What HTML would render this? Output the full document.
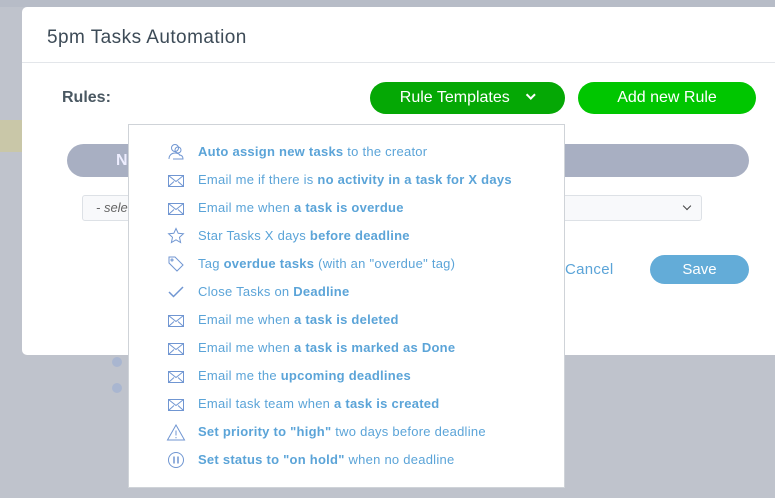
<!DOCTYPE html>
<html><head><style>
*{margin:0;padding:0;box-sizing:border-box}
body{width:775px;height:498px;overflow:hidden;background:#bfc3cc;font-family:"Liberation Sans",sans-serif;position:relative}
.abs{position:absolute}
.modal{left:22px;top:7px;width:760px;height:348px;background:#fff;border-radius:5px}
.title{left:47px;top:27px;font-size:19px;color:#3d4b57;letter-spacing:0.45px}
.hr{left:22px;top:62px;width:753px;height:1px;background:#e3e6ea}
.rules{left:62px;top:89px;font-size:16px;font-weight:bold;color:#4a5862}
.btn{border-radius:16px;color:#fff;font-size:16px;text-align:center;line-height:31px}
.dd{left:128px;top:124px;width:437px;height:364px;background:#fff;border:1px solid #cfd3d8}
.it{position:absolute;left:69px;font-size:13px;color:#5ba4d8;white-space:nowrap;letter-spacing:0.25px}
.it b{font-weight:bold}
.ic{position:absolute;left:38px;width:18px;height:18px}
svg{stroke:#7096d2;fill:none;stroke-width:1}
</style></head><body>
<div class="abs" style="left:0;top:0;width:775px;height:7px;background:#b7bcc7"></div>
<div class="abs" style="left:0;top:120px;width:22px;height:32px;background:#c9c7a8"></div>
<div class="abs" style="left:112px;top:357px;width:10px;height:10px;border-radius:5px;background:#a9b6d0"></div>
<div class="abs" style="left:112px;top:383px;width:10px;height:10px;border-radius:5px;background:#a9b6d0"></div>
<div class="abs modal"></div>
<div class="abs title">5pm Tasks Automation</div>
<div class="abs hr"></div>
<div class="abs rules">Rules:</div>
<div class="abs btn" style="left:370px;top:82px;width:195px;height:32px;background:#05a805">Rule Templates <span style="margin-left:14px;display:inline-block;width:7px;height:7px;border-right:2px solid #fff;border-bottom:2px solid #fff;transform:rotate(45deg) translate(-3px,-2px)"></span></div>
<div class="abs btn" style="left:578px;top:82px;width:178px;height:32px;background:#00c600">Add new Rule</div>
<div class="abs" style="left:67px;top:144px;width:682px;height:33px;border-radius:17px;background:#a8afc2;color:#eef;font-weight:bold;font-size:16px;line-height:33px;padding-left:49px">N</div>
<div class="abs" style="left:82px;top:195px;width:620px;height:26px;border:1px solid #dde1e6;border-radius:3px;background:#f8f9fb;font-size:13px;font-style:italic;color:#666;line-height:24px;padding-left:13px">- sele</div>
<div class="abs" style="left:684px;top:203px;width:6px;height:6px;border-right:1.5px solid #444;border-bottom:1.5px solid #444;transform:rotate(45deg)"></div>
<div class="abs" style="left:565px;top:261px;font-size:15px;color:#5ba4d8;letter-spacing:0.3px">Cancel</div>
<div class="abs btn" style="left:650px;top:255px;width:99px;height:29px;line-height:29px;font-size:15px;background:#63acd8">Save</div>
<div class="abs dd">
<svg class="ic" style="top:18px" viewBox="0 0 18 18"><circle cx="8" cy="5" r="3.5"/><circle cx="11" cy="7" r="3"/><path d="M2 16c0-4 3-6 6-6s4 1 5 2M6 16h10c0-3-2-4-4-4"/></svg>
<div class="it" style="top:19px"><b>Auto assign new tasks</b> to the creator</div>
<svg class="ic" style="top:47px" viewBox="0 0 18 18"><rect x="1.5" y="3.5" width="15" height="11"/><path d="M1.5 3.5l7.5 6 7.5-6M1.5 14.5l5.5-5M16.5 14.5l-5.5-5"/></svg>
<div class="it" style="top:47px">Email me if there is <b>no activity in a task for X days</b></div>
<svg class="ic" style="top:75px" viewBox="0 0 18 18"><rect x="1.5" y="3.5" width="15" height="11"/><path d="M1.5 3.5l7.5 6 7.5-6M1.5 14.5l5.5-5M16.5 14.5l-5.5-5"/></svg>
<div class="it" style="top:75px">Email me when <b>a task is overdue</b></div>
<svg class="ic" style="top:102px" viewBox="0 0 18 18"><path d="M9 1.5l2.2 4.8 5.2.5-3.9 3.5 1.1 5.2L9 12.8l-4.6 2.7 1.1-5.2-3.9-3.5 5.2-.5z"/></svg>
<div class="it" style="top:103px">Star Tasks X days <b>before deadline</b></div>
<svg class="ic" style="top:130px" viewBox="0 0 18 18"><path d="M2 2h6l8 8-6 6-8-8z"/><circle cx="5" cy="5" r="1"/></svg>
<div class="it" style="top:131px">Tag <b>overdue tasks</b> (with an "overdue" tag)</div>
<svg class="ic" style="top:158px" viewBox="0 0 18 18"><path d="M2 9l4.5 4.5L16 4" stroke-width="1.5"/></svg>
<div class="it" style="top:159px">Close Tasks on <b>Deadline</b></div>
<svg class="ic" style="top:187px" viewBox="0 0 18 18"><rect x="1.5" y="3.5" width="15" height="11"/><path d="M1.5 3.5l7.5 6 7.5-6M1.5 14.5l5.5-5M16.5 14.5l-5.5-5"/></svg>
<div class="it" style="top:187px">Email me when <b>a task is deleted</b></div>
<svg class="ic" style="top:215px" viewBox="0 0 18 18"><rect x="1.5" y="3.5" width="15" height="11"/><path d="M1.5 3.5l7.5 6 7.5-6M1.5 14.5l5.5-5M16.5 14.5l-5.5-5"/></svg>
<div class="it" style="top:215px">Email me when <b>a task is marked as Done</b></div>
<svg class="ic" style="top:243px" viewBox="0 0 18 18"><rect x="1.5" y="3.5" width="15" height="11"/><path d="M1.5 3.5l7.5 6 7.5-6M1.5 14.5l5.5-5M16.5 14.5l-5.5-5"/></svg>
<div class="it" style="top:243px">Email me the <b>upcoming deadlines</b></div>
<svg class="ic" style="top:271px" viewBox="0 0 18 18"><rect x="1.5" y="3.5" width="15" height="11"/><path d="M1.5 3.5l7.5 6 7.5-6M1.5 14.5l5.5-5M16.5 14.5l-5.5-5"/></svg>
<div class="it" style="top:271px">Email task team when <b>a task is created</b></div>
<svg class="ic" style="top:298px;left:37px;width:20px;height:20px" viewBox="0 0 20 20"><path d="M10 2L1.5 17h17z"/><path d="M10 7.5v5M10 14v1.2"/></svg>
<div class="it" style="top:299px"><b>Set priority to "high"</b> two days before deadline</div>
<svg class="ic" style="top:326px" viewBox="0 0 18 18"><circle cx="9" cy="9" r="7.5"/><path d="M7 5.5v7M11 5.5v7" stroke-width="1.5"/></svg>
<div class="it" style="top:327px"><b>Set status to "on hold"</b> when no deadline</div>
</div>
</body></html>
